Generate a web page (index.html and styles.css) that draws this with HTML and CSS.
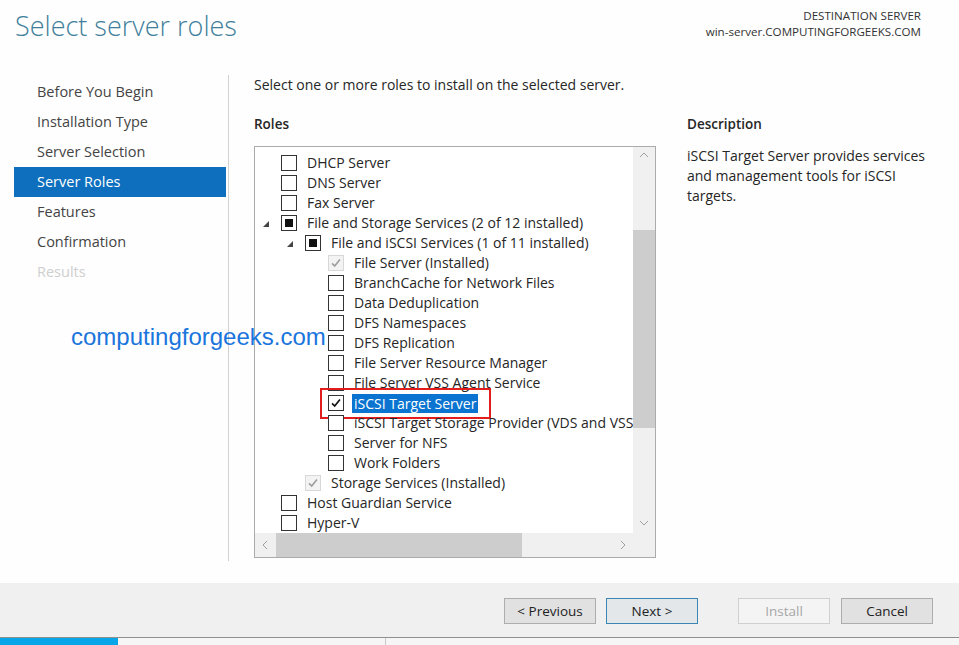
FILE: index.html
```html
<!DOCTYPE html>
<html>
<head>
    <title>Add Roles and Features Wizard</title>
    <link rel="stylesheet" href="styles.css">
</head>
<body>
    <div class="header">
        <h1 class="title">Select server roles</h1>
        <div class="dest">
            <div>DESTINATION SERVER</div>
            <div>win-server.COMPUTINGFORGEEKS.COM</div>
        </div>
    </div>

    <div class="main">
        <ul class="nav">
            <li>Before You Begin</li>
            <li>Installation Type</li>
            <li>Server Selection</li>
            <li class="active">Server Roles</li>
            <li>Features</li>
            <li>Confirmation</li>
            <li class="disabled">Results</li>
        </ul>

        <div class="content">
            <p class="intro">Select one or more roles to install on the selected server.</p>
            <div class="columns">
                <div class="roles">
                    <div class="label">Roles</div>
                    <div class="listbox">
                        <div class="items">
                            <div class="row"><span class="twisty"></span><span class="cb"></span><span class="txt">DHCP Server</span></div>
                            <div class="row"><span class="twisty"></span><span class="cb"></span><span class="txt">DNS Server</span></div>
                            <div class="row"><span class="twisty"></span><span class="cb"></span><span class="txt">Fax Server</span></div>
                            <div class="row"><span class="twisty open"></span><span class="cb partial"></span><span class="txt">File and Storage Services (2 of 12 installed)</span></div>
                            <div class="row lvl-1"><span class="twisty open"></span><span class="cb partial"></span><span class="txt">File and iSCSI Services (1 of 11 installed)</span></div>
                            <div class="row lvl-2"><span class="twisty"></span><span class="cb installed"><svg viewBox="0 0 16 16"><polyline points="3.5,8.5 6.5,11.5 12.5,4"/></svg></span><span class="txt">File Server (Installed)</span></div>
                            <div class="row lvl-2"><span class="twisty"></span><span class="cb"></span><span class="txt">BranchCache for Network Files</span></div>
                            <div class="row lvl-2"><span class="twisty"></span><span class="cb"></span><span class="txt">Data Deduplication</span></div>
                            <div class="row lvl-2"><span class="twisty"></span><span class="cb"></span><span class="txt">DFS Namespaces</span></div>
                            <div class="row lvl-2"><span class="twisty"></span><span class="cb"></span><span class="txt">DFS Replication</span></div>
                            <div class="row lvl-2"><span class="twisty"></span><span class="cb"></span><span class="txt">File Server Resource Manager</span></div>
                            <div class="row lvl-2"><span class="twisty"></span><span class="cb"></span><span class="txt">File Server VSS Agent Service</span></div>
                            <div class="row lvl-2 marked"><span class="twisty"></span><span class="cb checked"><svg viewBox="0 0 16 16"><polyline points="3.5,8.5 6.5,11.5 12.5,4"/></svg></span><span class="txt selected">iSCSI Target Server</span><span class="redbox"></span></div>
                            <div class="row lvl-2"><span class="twisty"></span><span class="cb"></span><span class="txt">iSCSI Target Storage Provider (VDS and VSS hardware providers)</span></div>
                            <div class="row lvl-2"><span class="twisty"></span><span class="cb"></span><span class="txt">Server for NFS</span></div>
                            <div class="row lvl-2"><span class="twisty"></span><span class="cb"></span><span class="txt">Work Folders</span></div>
                            <div class="row lvl-1"><span class="twisty"></span><span class="cb installed"><svg viewBox="0 0 16 16"><polyline points="3.5,8.5 6.5,11.5 12.5,4"/></svg></span><span class="txt">Storage Services (Installed)</span></div>
                            <div class="row"><span class="twisty"></span><span class="cb"></span><span class="txt">Host Guardian Service</span></div>
                            <div class="row"><span class="twisty"></span><span class="cb"></span><span class="txt">Hyper-V</span></div>
                        </div>
                        <div class="vscroll">
                            <svg class="arrow" viewBox="0 0 22 16"><polyline points="7,10 11,6 15,10"/></svg>
                            <div class="vthumb"></div>
                            <svg class="arrow down" viewBox="0 0 22 16"><polyline points="7,6 11,10 15,6"/></svg>
                        </div>
                        <div class="hscroll">
                            <svg class="arrow" viewBox="0 0 21 20"><polyline points="12,6 8,10 12,14"/></svg>
                            <div class="hthumb"></div>
                            <svg class="arrow right" viewBox="0 0 21 20"><polyline points="9,6 13,10 9,14"/></svg>
                        </div>
                        <div class="corner"></div>
                    </div>
                </div>
                <div class="description">
                    <div class="label">Description</div>
                    <p>iSCSI Target Server provides services and management tools for iSCSI targets.</p>
                </div>
            </div>
        </div>
    </div>

    <div class="footer">
        <button class="btn">&lt; Previous</button>
        <button class="btn default">Next &gt;</button>
        <button class="btn off">Install</button>
        <button class="btn">Cancel</button>
    </div>

    <div class="taskbar">
        <div class="task-active"></div>
        <div class="task-item"></div>
    </div>

    <div class="watermark">computingforgeeks.com</div>
</body>
</html>
```

FILE: styles.css
```css
body {
    margin: 0;
    width: 959px;
    height: 645px;
    overflow: hidden;
    background: #fefefe;
    font-family: "Open Sans", "Noto Sans", sans-serif;
    font-size: 14px;
    color: #262626;
    position: relative;
}

.header {
    height: 75px;
    display: flex;
    justify-content: space-between;
    align-items: flex-start;
}

.title {
    margin: 6px 0 0 15px;
    font-size: 27px;
    font-weight: 300;
    line-height: 40px;
    color: #3f7f9b;
}

.dest {
    margin: 8px 38px 0 0;
    text-align: right;
    font-size: 11.6px;
    line-height: 16px;
    color: #333;
}

.main {
    height: 508px;
    display: flex;
}

.nav {
    list-style: none;
    margin: 0 0 22px 0;
    padding: 2px 2px 0 14px;
    width: 212px;
    border-right: 1px solid #d2d2d2;
}

.nav li {
    height: 30px;
    line-height: 30px;
    padding-left: 23px;
    font-size: 14.5px;
    color: #444;
}

.nav li.active {
    background: #0d6fbd;
    color: #fff;
}

.nav li.disabled {
    color: #cfcfcf;
}

.content {
    padding-left: 25px;
}

.intro {
    margin: 0;
    line-height: 20px;
}

.columns {
    display: flex;
    margin-top: 19px;
}

.label {
    line-height: 20px;
    font-weight: 600;
    font-size: 13.5px;
    margin-bottom: 12px;
}

.listbox {
    width: 400px;
    border: 1px solid #ababab;
    display: grid;
    grid-template-columns: 378px 22px;
    grid-template-rows: 386px 24px;
    background: #fff;
}

.items {
    padding-top: 6px;
    overflow: hidden;
}

.row {
    height: 20px;
    display: flex;
    align-items: center;
    padding-left: 7px;
    white-space: nowrap;
    position: relative;
}

.row.lvl-1 {
    padding-left: 31px;
}

.row.lvl-2 {
    padding-left: 54px;
}

.twisty {
    width: 19px;
    height: 20px;
    flex: none;
    position: relative;
}

.twisty.open::after {
    content: "";
    position: absolute;
    left: 1px;
    top: 8px;
    border-style: solid;
    border-width: 0 0 6px 6px;
    border-color: transparent transparent #444 transparent;
}

.cb {
    width: 14px;
    height: 14px;
    flex: none;
    border: 1px solid #333;
    background: #fff;
    position: relative;
}

.cb svg {
    width: 14px;
    height: 14px;
    display: block;
    fill: none;
    stroke: #111;
    stroke-width: 1.9;
}

.cb.partial::after {
    content: "";
    position: absolute;
    left: 3px;
    top: 3px;
    width: 8px;
    height: 8px;
    background: #111;
}

.cb.installed {
    border-color: #d8d8d8;
    background: #f3f3f3;
}

.cb.installed svg {
    stroke: #9e9e9e;
}

.txt {
    margin-left: 10px;
    line-height: 20px;
}

.txt.selected {
    background: #0a74d0;
    color: #fff;
    margin-left: 8px;
    padding: 0 2px;
    line-height: 19px;
}

/* annotation drawn over the list */
.redbox {
    position: absolute;
    left: 65px;
    top: -5px;
    width: 167px;
    height: 27px;
    border: 2px solid #e21d1d;
}

.vscroll {
    background: #f0f0f0;
    display: flex;
    flex-direction: column;
}

.vthumb {
    height: 198px;
    margin-top: 67px;
    background: #cdcdcd;
}

.arrow {
    display: block;
    fill: none;
    stroke: #a0a0a0;
    stroke-width: 1;
}

.vscroll .arrow {
    width: 22px;
    height: 16px;
}

.vscroll .arrow.down {
    margin-top: auto;
    margin-bottom: 2px;
}

.hscroll {
    background: #f0f0f0;
    display: flex;
    align-items: center;
}

.hscroll .arrow {
    width: 21px;
    height: 20px;
}

.hscroll .arrow.right {
    margin-left: auto;
}

.hthumb {
    width: 246px;
    height: 24px;
    background: #cdcdcd;
}

.corner {
    background: #f0f0f0;
}

.description {
    margin-left: 31px;
    width: 245px;
}

.description p {
    margin: 0;
    line-height: 20px;
}

.footer {
    height: 54px;
    background: #f0f0f0;
    display: flex;
    align-items: flex-start;
    padding: 15px 26px 0 0;
    box-sizing: border-box;
    justify-content: flex-end;
}

.btn {
    width: 92px;
    height: 26px;
    margin-left: 10px;
    background: #e1e1e1;
    border: 1px solid #adadad;
    font-family: "Open Sans", "Noto Sans", sans-serif;
    font-size: 13.5px;
    color: #222;
    padding: 0;
}

.btn.default {
    border-color: #3a86b5;
    background: #e3e7ea;
}

.btn.off {
    margin-left: 40px;
    background: #f4f4f4;
    border-color: #d0d0d0;
    color: #a6a6a6;
}

.btn.off + .btn {
    margin-left: 11px;
}

.taskbar {
    height: 8px;
    border-top: 1px solid #8f8f8f;
    background: #f6f6f6;
    display: flex;
}

.task-active {
    width: 118px;
    background: #06a6e8;
}

.task-item {
    width: 267px;
    border-right: 1px solid #c9c9c9;
}

/* site watermark sitting over the dialog */
.watermark {
    position: absolute;
    left: 71px;
    top: 323px;
    font-family: "Liberation Sans", Arial, sans-serif;
    font-size: 24px;
    color: #1a75dc;
}
```
